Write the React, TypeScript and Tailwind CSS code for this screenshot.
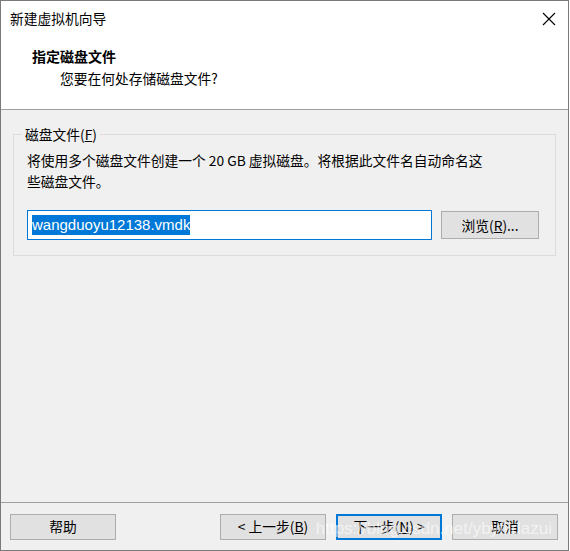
const font = { fontFamily: '"Noto Sans CJK SC", "Liberation Sans", sans-serif' };

function DialogButton({
  children,
  primary = false,
}: {
  children: React.ReactNode;
  primary?: boolean;
}) {
  return (
    <button
      className={
        primary
          ? 'w-[106px] h-[26px] bg-[#e1e1e1] border-2 border-[#0078d7] text-[13.75px] text-black flex items-center justify-center'
          : 'w-[106px] h-[26px] bg-[#e1e1e1] border border-[#adadad] text-[13.75px] text-black flex items-center justify-center'
      }
    >
      {children}
    </button>
  );
}

export default function App() {
  return (
    <div
      className="relative w-[569px] h-[551px] bg-[#f0f0f0] border border-[#7a7a7a] flex flex-col overflow-hidden"
      style={font}
    >
      {/* header */}
      <div className="bg-white h-[109px] flex flex-col border-b border-[#a0a0a0]">
        <div className="h-[36px] flex items-center justify-between pl-[9px] pr-[12px]">
          <span className="text-[13.75px] text-black leading-none">新建虚拟机向导</span>
          <svg width="14" height="14" viewBox="0 0 14 14" className="text-black">
            <path d="M1 1L13 13M13 1L1 13" stroke="currentColor" strokeWidth="1.1" />
          </svg>
        </div>
        <div className="pl-[31px] pt-[9px] text-[14px] font-bold text-black leading-[20px]">
          指定磁盘文件
        </div>
        <div className="pl-[59px] pt-[2px] text-[13.75px] text-black leading-[20px]">
          您要在何处存储磁盘文件?
        </div>
      </div>

      {/* body */}
      <div className="flex-1 px-[12px] pt-[15px]">
        <fieldset className="border border-[#dcdcdc] h-[131px] pl-[13px] pr-[15px] pt-0">
          <legend className="ml-[-5px] px-[3px] text-[13.75px] text-black leading-[18px]">
            磁盘文件(<span className="underline">F</span>)
          </legend>
          <p className="text-[13.75px] leading-[21px] text-black mt-[7px] pr-[50px]">
            将使用多个磁盘文件创建一个 20 GB 虚拟磁盘。将根据此文件名自动命名这些磁盘文件。
          </p>
          <div className="flex items-center mt-[18px] gap-[9px]">
            <div className="w-[405px] h-[30px] bg-white border border-[#0078d7] flex items-center pl-[4px]">
              <span
                className="bg-[#0078d7] text-white text-[15px] leading-[20px]"
                style={{ fontFamily: '"Liberation Sans", sans-serif' }}
              >
                wangduoyu12138.vmdk
              </span>
            </div>
            <button className="w-[98px] h-[28px] bg-[#e1e1e1] border border-[#adadad] text-[13.75px] text-black flex items-center justify-center">
              浏览(<span className="underline">R</span>)...
            </button>
          </div>
        </fieldset>
      </div>

      {/* footer */}
      <div className="h-[48px] border-t border-[#a0a0a0] flex items-center pl-[9px] pr-[10px]">
        <DialogButton>帮助</DialogButton>
        <div className="flex-1" />
        <div className="flex gap-[10px]">
          <DialogButton>
            &lt; 上一步(<span className="underline">B</span>)
          </DialogButton>
          <DialogButton primary>
            下一步(<span className="underline">N</span>) &gt;
          </DialogButton>
          <DialogButton>取消</DialogButton>
        </div>
      </div>

      {/* watermark */}
      <span
        className="absolute right-[16px] bottom-[13px] text-[17px] text-white/60 leading-none pointer-events-none"
        style={{ fontFamily: '"Liberation Sans", sans-serif' }}
      >
        https://blog.csdn.net/ybyfiidazui
      </span>
    </div>
  );
}
